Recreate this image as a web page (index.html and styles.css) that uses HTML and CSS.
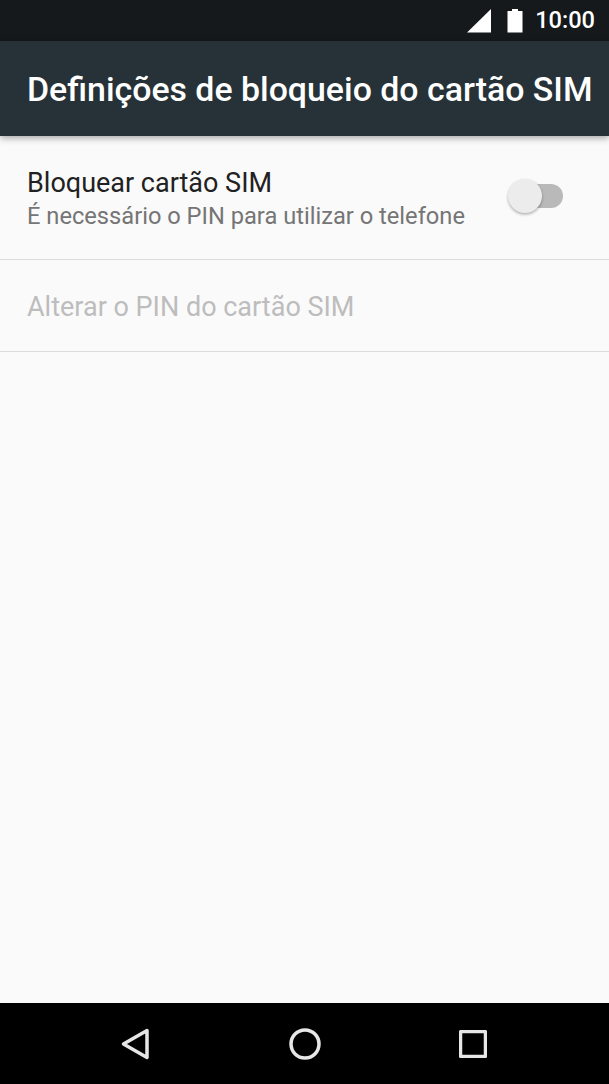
FILE: index.html
```html
<!DOCTYPE html>
<html lang="pt">
<head>
<meta charset="utf-8">
<title>Definições de bloqueio do cartão SIM</title>
<link rel="stylesheet" href="styles.css">
</head>
<body>
<div class="phone">
  <div class="statusbar">
    <svg class="signal" width="24" height="24" viewBox="0 0 24 24"><path d="M0 23.500 24 0v23.500z"/></svg>
    <svg class="battery" width="16" height="24" viewBox="0 0 16 24"><path d="M5 0h6v2h4.500v21.500H.5V2H5z"/></svg>
    <span class="clock">10:00</span>
  </div>
  <header class="appbar"><h1>Definições de bloqueio do cartão SIM</h1></header>
  <main class="content">
    <div class="row row-switch">
      <div class="texts">
        <div class="title">Bloquear cartão SIM</div>
        <div class="summary">É necessário o PIN para utilizar o telefone</div>
      </div>
      <div class="switch"><span class="track"></span><span class="thumb"></span></div>
    </div>
    <div class="row row-plain">
      <div class="title disabled">Alterar o PIN do cartão SIM</div>
    </div>
  </main>
  <nav class="navbar">
    <svg width="30" height="32" viewBox="0 0 30 32"><path class="nav" d="M26 2.500 2.500 16 26 29.500z"/></svg>
    <svg width="32" height="32" viewBox="0 0 32 32"><circle class="nav" cx="16" cy="16" r="14"/></svg>
    <svg width="28" height="28" viewBox="0 0 28 28"><rect class="nav" x="1.500" y="1.500" width="25" height="25" rx="1"/></svg>
  </nav>
</div>
</body>
</html>
```
FILE: styles.css
```css
* { box-sizing: border-box; }
html, body { margin: 0; padding: 0; }
body { font-family: Roboto, "Liberation Sans", sans-serif; background: #fafafa; }
.phone { width: 609px; height: 1084px; display: flex; flex-direction: column; overflow: hidden; }
.statusbar { height: 41px; flex: none; background: #15191c; display: flex; align-items: center; justify-content: flex-end; padding: 0 14px 0 0; color: #fff; }
.statusbar svg { fill: #fff; display: block; }
.signal { margin: 0 16px 0 0; }
.battery { margin: 0 12px 0 0; }
.clock { font-size: 23.600px; font-weight: 500; line-height: 41px; }
.appbar { height: 94.500px; flex: none; background: #263238; display: flex; align-items: center; padding: 2px 0 0 27px; box-shadow: 0 2px 7px rgba(0,0,0,.35); position: relative; }
.appbar h1 { margin: 0; font-size: 33.860px; font-weight: 500; color: #fff; white-space: nowrap; }
.content { flex: 1; background: #fafafa; }
.row { border-bottom: 1.500px solid #dcdcdc; display: flex; align-items: center; padding: 0 27px; }
.row-switch { height: 124px; justify-content: space-between; padding-right: 46px; }
.row-plain { height: 92.500px; }
.texts { padding: 5px 0 0; }
.title { font-size: 27px; color: #212121; line-height: 34px; }
.title.disabled { color: #bdbdbd; }
.row-plain .title { padding: 4px 0 0; }
.summary { font-size: 23.660px; color: #757575; line-height: 33px; }
.switch { position: relative; width: 56px; height: 36px; margin: -3px 0 0; }
.track { position: absolute; left: 12px; top: 6px; width: 44px; height: 24px; border-radius: 12px; background: #b9b9b9; }
.thumb { position: absolute; left: 1px; top: 1px; width: 34px; height: 34px; border-radius: 50%; background: #ececec; box-shadow: 0 1.500px 3px rgba(0,0,0,.3); }
.navbar { height: 81px; flex: none; background: #000; display: flex; align-items: center; justify-content: space-between; padding: 0 122px 0 121px; }
.nav { fill: none; stroke: #e6e6e6; stroke-width: 3.500; stroke-linejoin: round; }
```
